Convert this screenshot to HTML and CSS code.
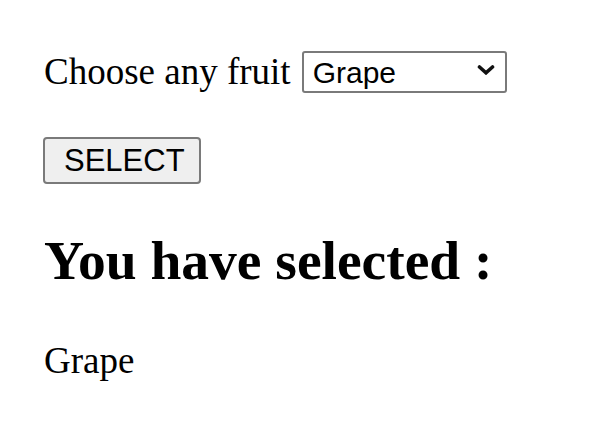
FILE: index.html
```html
<!DOCTYPE html>
<html>
<head>
<meta charset="utf-8">
<link rel="stylesheet" href="styles.css">
</head>
<body>
<div class="page">
  <div class="row">
    <label class="label" for="fruit">Choose any fruit</label>
    <span class="select-wrap">
      <select id="fruit" class="select">
        <option>Apple</option>
        <option>Mango</option>
        <option selected>Grape</option>
        <option>Banana</option>
      </select>
      <svg class="chevron" width="18" height="10" viewBox="0 0 18 10"><path d="M2.5 2 L9 7.8 L15.5 2" fill="none" stroke="#111" stroke-width="3.6" stroke-linecap="round" stroke-linejoin="miter"/></svg>
    </span>
  </div>
  <button class="btn">SELECT</button>
  <h2 class="heading">You have selected :</h2>
  <p class="result">Grape</p>
</div>
</body>
</html>
```
FILE: styles.css
```css
html, body {
  margin: 0;
  padding: 0;
  background: #fff;
}
.page {
  padding: 51px 0 0 44px;
  font-family: "Liberation Serif", "Times New Roman", serif;
  font-size: 37px;
  color: #000;
}
.row {
  display: flex;
  align-items: center;
  gap: 11px;
  height: 42px;
}
.label {
  line-height: 42px;
}
.select-wrap {
  position: relative;
  display: block;
  width: 205px;
  height: 42px;
}
.select {
  appearance: none;
  -webkit-appearance: none;
  display: block;
  box-sizing: border-box;
  width: 205px;
  height: 42px;
  margin: 0;
  padding: 0 0 0 9px;
  border: 2px solid #7a7a7a;
  border-radius: 3px;
  background: #fff;
  font-family: "Liberation Sans", Arial, sans-serif;
  font-size: 30px;
  color: #000;
}
.chevron {
  position: absolute;
  right: 12px;
  top: 14px;
  pointer-events: none;
}
.btn {
  display: block;
  box-sizing: border-box;
  width: 158px;
  height: 47px;
  margin: 44px 0 0 -1px;
  padding: 0 0 0 19px;
  text-align: left;
  border: 2px solid #7a7a7a;
  border-radius: 4px;
  background: #efefef;
  font-family: "Liberation Sans", Arial, sans-serif;
  font-size: 31px;
  color: #000;
}
.heading {
  margin: 45px 0 0 0;
  font-size: 55.5px;
  line-height: 64px;
  font-weight: bold;
}
.result {
  margin: 46px 0 0 0;
  line-height: 43px;
}
```
